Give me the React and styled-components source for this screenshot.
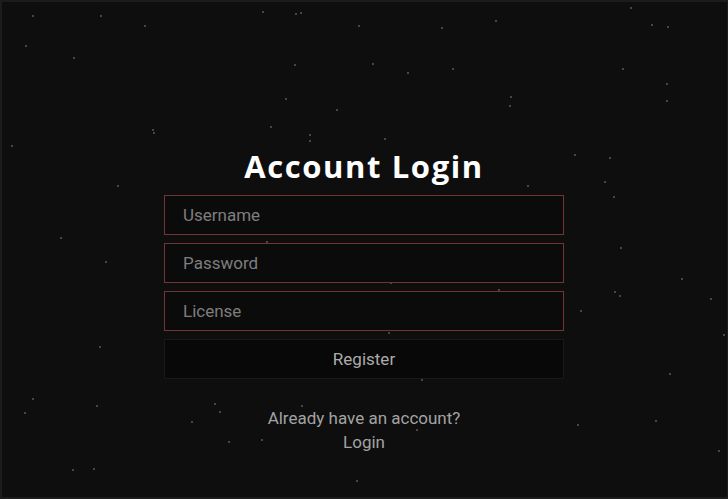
import React from "react";
import styled, { createGlobalStyle } from "styled-components";

const Global = createGlobalStyle`
  html, body { margin: 0; padding: 0; background: #0e0e0e; }
  * { box-sizing: border-box; }
`;

const Page = styled.div`
  position: relative;
  width: 728px;
  height: 499px;
  overflow: hidden;
  background: #0e0e0e;
  box-shadow: inset 2px 2px 0 #1c1c1c, inset -1px -2px 0 #1c1c1c;
  display: flex;
  flex-direction: column;
  align-items: center;
  padding-top: 145px;
  font-family: Roboto, "Liberation Sans", sans-serif;
`;

const Star = styled.span`
  position: absolute;
  width: 2px;
  height: 2px;
  border-radius: 50%;
  background: #5a5a5a;
`;

const Title = styled.h1`
  position: relative;
  margin: 0 0 8px;
  font-family: "Open Sans", sans-serif;
  font-weight: 700;
  font-size: 31px;
  line-height: 42px;
  letter-spacing: 1.6px;
  color: #ffffff;
`;

const Form = styled.form`
  position: relative;
  width: 400px;
  display: flex;
  flex-direction: column;
  gap: 8px;
`;

const Field = styled.input`
  height: 40px;
  width: 100%;
  padding: 0 18px;
  background: #0b0b0b;
  border: 1px solid #723434;
  color: #ddd;
  font-family: Roboto, sans-serif;
  font-size: 17px;
  outline: none;
  &::placeholder { color: #7e7e7e; }
`;

const Button = styled.button`
  height: 40px;
  width: 100%;
  background: #080808;
  border: 1px solid #191919;
  color: #ababab;
  font-family: Roboto, sans-serif;
  font-size: 17px;
  cursor: pointer;
`;

const Footer = styled.div`
  position: relative;
  margin-top: 27px;
  text-align: center;
  color: #a3a3a3;
  font-size: 17px;
  line-height: 24px;
`;

const stars = [
  [33,16],[101,16],[145,26],[263,12],[296,14],[301,13],[359,26],[442,28],[496,21],[631,8],[652,25],[668,27],
  [26,46],[74,58],[295,65],[373,64],[408,73],[453,69],[623,69],[667,84],[511,97],[510,106],[286,99],[667,101],
  [337,110],[153,130],[154,133],[271,127],[310,135],[310,141],[12,146],[385,139],[575,155],[610,158],[118,186],
  [605,182],[528,186],[614,197],[61,238],[267,242],[106,262],[621,248],[391,283],[460,282],[499,290],[682,279],
  [615,292],[620,296],[711,299],[581,311],[724,335],[100,347],[389,333],[320,377],[422,380],[670,374],[33,399],
  [97,406],[215,404],[220,412],[25,413],[192,422],[302,406],[423,416],[578,425],[656,421],[262,440],[229,442],
  [417,430],[73,470],[94,469],[357,481],[719,451],
];

export default function App() {
  return (
    <>
      <Global />
      <Page>
        {stars.map(([x, y], i) => (
          <Star key={i} style={{ left: x - 1, top: y - 1 }} />
        ))}
        <Title>Account Login</Title>
        <Form onSubmit={(e) => e.preventDefault()}>
          <Field placeholder="Username" />
          <Field placeholder="Password" type="password" />
          <Field placeholder="License" />
          <Button type="submit">Register</Button>
        </Form>
        <Footer>
          Already have an account?
          <br />
          Login
        </Footer>
      </Page>
    </>
  );
}
